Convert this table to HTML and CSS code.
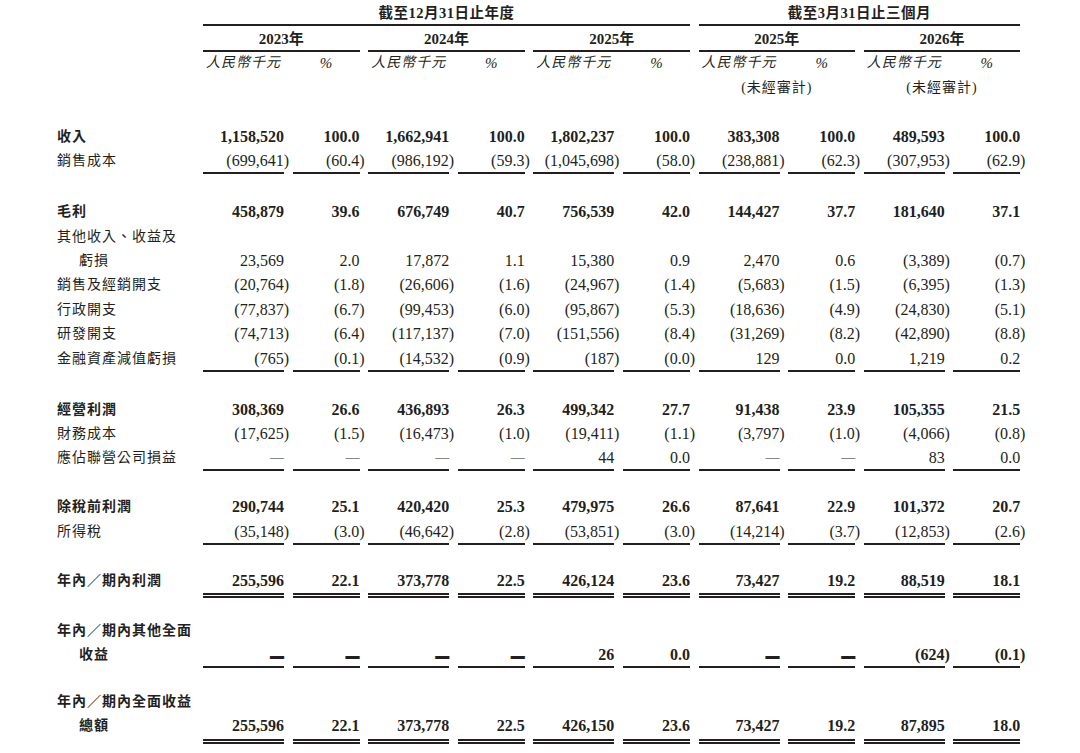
FILE: index.html
```html
<!DOCTYPE html>
<html lang="zh-Hant">
<head>
<meta charset="utf-8">
<title>綜合損益表</title>
<link rel="stylesheet" href="styles.css">
</head>
<body>
<div class="sheet">
  <div class="row hr1">
    <div></div>
    <div class="per">截至12月31日止年度</div>
    <div class="per q">截至3月31日止三個月</div>
  </div>
  <div class="row hr2">
    <div></div>
    <div class="yr">2023年</div>
    <div class="yr">2024年</div>
    <div class="yr">2025年</div>
    <div class="yr">2025年</div>
    <div class="yr">2026年</div>
  </div>
  <div class="row hr3">
    <div></div>
    <div class="cur">人民幣千元</div><div class="pc">%</div>
    <div class="cur">人民幣千元</div><div class="pc">%</div>
    <div class="cur">人民幣千元</div><div class="pc">%</div>
    <div class="cur">人民幣千元</div><div class="pc">%</div>
    <div class="cur">人民幣千元</div><div class="pc">%</div>
  </div>
  <div class="row hr4">
    <div class="aud a4">(未經審計)</div>
    <div class="aud a5">(未經審計)</div>
  </div>
  <div class="sp0"></div>

  <div class="row b">
    <div class="lbl">收入</div>
    <div class="v">1,158,520</div><div class="v">100.0</div>
    <div class="v">1,662,941</div><div class="v">100.0</div>
    <div class="v">1,802,237</div><div class="v">100.0</div>
    <div class="v">383,308</div><div class="v">100.0</div>
    <div class="v">489,593</div><div class="v">100.0</div>
  </div>
  <div class="row ul">
    <div class="lbl">銷售成本</div>
    <div class="v">(699,641<span class="rp">)</span></div><div class="v">(60.4<span class="rp">)</span></div>
    <div class="v">(986,192<span class="rp">)</span></div><div class="v">(59.3<span class="rp">)</span></div>
    <div class="v">(1,045,698<span class="rp">)</span></div><div class="v">(58.0<span class="rp">)</span></div>
    <div class="v">(238,881<span class="rp">)</span></div><div class="v">(62.3<span class="rp">)</span></div>
    <div class="v">(307,953<span class="rp">)</span></div><div class="v">(62.9<span class="rp">)</span></div>
  </div>
  <div class="spa"></div>

  <div class="row b">
    <div class="lbl">毛利</div>
    <div class="v">458,879</div><div class="v">39.6</div>
    <div class="v">676,749</div><div class="v">40.7</div>
    <div class="v">756,539</div><div class="v">42.0</div>
    <div class="v">144,427</div><div class="v">37.7</div>
    <div class="v">181,640</div><div class="v">37.1</div>
  </div>
  <div class="row">
    <div class="lbl">其他收入、收益及</div>
  </div>
  <div class="row">
    <div class="lbl ind">虧損</div>
    <div class="v">23,569</div><div class="v">2.0</div>
    <div class="v">17,872</div><div class="v">1.1</div>
    <div class="v">15,380</div><div class="v">0.9</div>
    <div class="v">2,470</div><div class="v">0.6</div>
    <div class="v">(3,389<span class="rp">)</span></div><div class="v">(0.7<span class="rp">)</span></div>
  </div>
  <div class="row">
    <div class="lbl">銷售及經銷開支</div>
    <div class="v">(20,764<span class="rp">)</span></div><div class="v">(1.8<span class="rp">)</span></div>
    <div class="v">(26,606<span class="rp">)</span></div><div class="v">(1.6<span class="rp">)</span></div>
    <div class="v">(24,967<span class="rp">)</span></div><div class="v">(1.4<span class="rp">)</span></div>
    <div class="v">(5,683<span class="rp">)</span></div><div class="v">(1.5<span class="rp">)</span></div>
    <div class="v">(6,395<span class="rp">)</span></div><div class="v">(1.3<span class="rp">)</span></div>
  </div>
  <div class="row">
    <div class="lbl">行政開支</div>
    <div class="v">(77,837<span class="rp">)</span></div><div class="v">(6.7<span class="rp">)</span></div>
    <div class="v">(99,453<span class="rp">)</span></div><div class="v">(6.0<span class="rp">)</span></div>
    <div class="v">(95,867<span class="rp">)</span></div><div class="v">(5.3<span class="rp">)</span></div>
    <div class="v">(18,636<span class="rp">)</span></div><div class="v">(4.9<span class="rp">)</span></div>
    <div class="v">(24,830<span class="rp">)</span></div><div class="v">(5.1<span class="rp">)</span></div>
  </div>
  <div class="row">
    <div class="lbl">研發開支</div>
    <div class="v">(74,713<span class="rp">)</span></div><div class="v">(6.4<span class="rp">)</span></div>
    <div class="v">(117,137<span class="rp">)</span></div><div class="v">(7.0<span class="rp">)</span></div>
    <div class="v">(151,556<span class="rp">)</span></div><div class="v">(8.4<span class="rp">)</span></div>
    <div class="v">(31,269<span class="rp">)</span></div><div class="v">(8.2<span class="rp">)</span></div>
    <div class="v">(42,890<span class="rp">)</span></div><div class="v">(8.8<span class="rp">)</span></div>
  </div>
  <div class="row ul">
    <div class="lbl">金融資產減值虧損</div>
    <div class="v">(765<span class="rp">)</span></div><div class="v">(0.1<span class="rp">)</span></div>
    <div class="v">(14,532<span class="rp">)</span></div><div class="v">(0.9<span class="rp">)</span></div>
    <div class="v">(187<span class="rp">)</span></div><div class="v">(0.0<span class="rp">)</span></div>
    <div class="v">129</div><div class="v">0.0</div>
    <div class="v">1,219</div><div class="v">0.2</div>
  </div>
  <div class="spa"></div>

  <div class="row b">
    <div class="lbl">經營利潤</div>
    <div class="v">308,369</div><div class="v">26.6</div>
    <div class="v">436,893</div><div class="v">26.3</div>
    <div class="v">499,342</div><div class="v">27.7</div>
    <div class="v">91,438</div><div class="v">23.9</div>
    <div class="v">105,355</div><div class="v">21.5</div>
  </div>
  <div class="row">
    <div class="lbl">財務成本</div>
    <div class="v">(17,625<span class="rp">)</span></div><div class="v">(1.5<span class="rp">)</span></div>
    <div class="v">(16,473<span class="rp">)</span></div><div class="v">(1.0<span class="rp">)</span></div>
    <div class="v">(19,411<span class="rp">)</span></div><div class="v">(1.1<span class="rp">)</span></div>
    <div class="v">(3,797<span class="rp">)</span></div><div class="v">(1.0<span class="rp">)</span></div>
    <div class="v">(4,066<span class="rp">)</span></div><div class="v">(0.8<span class="rp">)</span></div>
  </div>
  <div class="row ul">
    <div class="lbl">應佔聯營公司損益</div>
    <div class="v"><span class="dash">—</span></div><div class="v"><span class="dash">—</span></div>
    <div class="v"><span class="dash">—</span></div><div class="v"><span class="dash">—</span></div>
    <div class="v">44</div><div class="v">0.0</div>
    <div class="v"><span class="dash">—</span></div><div class="v"><span class="dash">—</span></div>
    <div class="v">83</div><div class="v">0.0</div>
  </div>
  <div class="spb"></div>

  <div class="row b">
    <div class="lbl">除稅前利潤</div>
    <div class="v">290,744</div><div class="v">25.1</div>
    <div class="v">420,420</div><div class="v">25.3</div>
    <div class="v">479,975</div><div class="v">26.6</div>
    <div class="v">87,641</div><div class="v">22.9</div>
    <div class="v">101,372</div><div class="v">20.7</div>
  </div>
  <div class="row ul">
    <div class="lbl">所得稅</div>
    <div class="v">(35,148<span class="rp">)</span></div><div class="v">(3.0<span class="rp">)</span></div>
    <div class="v">(46,642<span class="rp">)</span></div><div class="v">(2.8<span class="rp">)</span></div>
    <div class="v">(53,851<span class="rp">)</span></div><div class="v">(3.0<span class="rp">)</span></div>
    <div class="v">(14,214<span class="rp">)</span></div><div class="v">(3.7<span class="rp">)</span></div>
    <div class="v">(12,853<span class="rp">)</span></div><div class="v">(2.6<span class="rp">)</span></div>
  </div>
  <div class="spb"></div>

  <div class="row b dl">
    <div class="lbl">年內／期內利潤</div>
    <div class="v">255,596</div><div class="v">22.1</div>
    <div class="v">373,778</div><div class="v">22.5</div>
    <div class="v">426,124</div><div class="v">23.6</div>
    <div class="v">73,427</div><div class="v">19.2</div>
    <div class="v">88,519</div><div class="v">18.1</div>
  </div>
  <div class="spc"></div>

  <div class="row b">
    <div class="lbl">年內／期內其他全面</div>
  </div>
  <div class="row b ul">
    <div class="lbl ind">收益</div>
    <div class="v"><span class="dash bold">—</span></div><div class="v"><span class="dash bold">—</span></div>
    <div class="v"><span class="dash bold">—</span></div><div class="v"><span class="dash bold">—</span></div>
    <div class="v">26</div><div class="v">0.0</div>
    <div class="v"><span class="dash bold">—</span></div><div class="v"><span class="dash bold">—</span></div>
    <div class="v">(624<span class="rp">)</span></div><div class="v">(0.1<span class="rp">)</span></div>
  </div>
  <div class="spd"></div>

  <div class="row b">
    <div class="lbl">年內／期內全面收益</div>
  </div>
  <div class="row b dl">
    <div class="lbl ind">總額</div>
    <div class="v">255,596</div><div class="v">22.1</div>
    <div class="v">373,778</div><div class="v">22.5</div>
    <div class="v">426,150</div><div class="v">23.6</div>
    <div class="v">73,427</div><div class="v">19.2</div>
    <div class="v">87,895</div><div class="v">18.0</div>
  </div>
</div>
</body>
</html>
```

FILE: styles.css
```css
html, body {
  margin: 0;
  padding: 0;
  background: #ffffff;
}

body {
  color: #231f20;
  font-family: "Liberation Serif", "Noto Sans CJK TC", serif;
}

.sheet {
  padding-left: 57px;
}

.row {
  display: grid;
  grid-template-columns: 137.4px repeat(5, 81px 67px);
  column-gap: 8.6px;
}

.row > div {
  height: 24.4px;
  line-height: 24.4px;
  white-space: nowrap;
}

/* header rows */
.hr1 > div {
  height: 22px;
  line-height: 22px;
  padding-top: 2px;
}

.per {
  grid-column: 2 / 8;
  text-align: center;
  font-weight: 700;
  font-size: 14.5px;
  letter-spacing: 0.5px;
  border-bottom: 2px solid #231f20;
}

.per.q {
  grid-column: 8 / 12;
}

.hr2 > div {
  height: 22px;
  line-height: 22px;
  padding-top: 2px;
}

.yr {
  grid-column: span 2;
  text-align: center;
  font-weight: 700;
  font-size: 15px;
  border-bottom: 2px solid #231f20;
}

.hr3 > div {
  height: 22px;
  line-height: 22px;
}

.cur {
  font-style: italic;
  font-size: 14px;
  letter-spacing: 1px;
  padding-left: 3px;
}

.pc {
  font-style: italic;
  font-size: 15px;
  text-align: center;
}

.hr4 > div {
  height: 24px;
  line-height: 24px;
  padding-top: 2px;
}

.aud {
  text-align: center;
  font-size: 14px;
  letter-spacing: 1px;
}

.a4 {
  grid-column: 8 / 10;
}

.a5 {
  grid-column: 10 / 12;
}

/* body rows */
.lbl {
  font-size: 14px;
  letter-spacing: 1px;
}

.ind {
  padding-left: 22px;
}

.v {
  text-align: right;
  font-size: 16px;
}

.b .lbl,
.b .v {
  font-weight: 700;
}

.row.ul > .v {
  height: 23.2px;
  border-bottom: 2px solid #231f20;
}

.dl .v {
  border-bottom: 5px double #231f20;
}

.rp {
  margin-right: -5px;
}

.dash {
  display: inline-block;
  font-size: 14px;
  font-weight: 400;
  vertical-align: 3px;
}

.dash.bold {
  font-weight: 700;
  transform: scaleY(3);
  vertical-align: 5px;
}

/* spacers between sections */
.sp0 {
  height: 24.8px;
}

.spa {
  height: 25.8px;
}

.spb {
  height: 23.8px;
}

.spc {
  height: 20.6px;
}

.spd {
  height: 21.8px;
}
```
